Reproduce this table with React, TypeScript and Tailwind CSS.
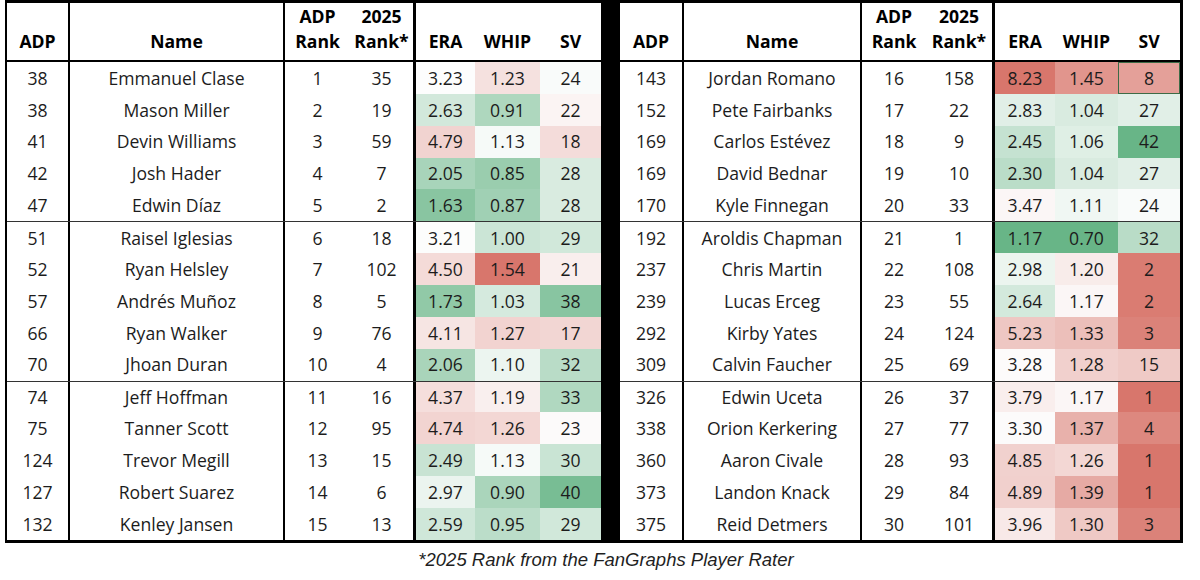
type Row = [number, string, number, number, number, number, number];

const leftRows: Row[] = [
  [38, "Emmanuel Clase", 1, 35, 3.23, 1.23, 24],
  [38, "Mason Miller", 2, 19, 2.63, 0.91, 22],
  [41, "Devin Williams", 3, 59, 4.79, 1.13, 18],
  [42, "Josh Hader", 4, 7, 2.05, 0.85, 28],
  [47, "Edwin Díaz", 5, 2, 1.63, 0.87, 28],
  [51, "Raisel Iglesias", 6, 18, 3.21, 1.0, 29],
  [52, "Ryan Helsley", 7, 102, 4.5, 1.54, 21],
  [57, "Andrés Muñoz", 8, 5, 1.73, 1.03, 38],
  [66, "Ryan Walker", 9, 76, 4.11, 1.27, 17],
  [70, "Jhoan Duran", 10, 4, 2.06, 1.1, 32],
  [74, "Jeff Hoffman", 11, 16, 4.37, 1.19, 33],
  [75, "Tanner Scott", 12, 95, 4.74, 1.26, 23],
  [124, "Trevor Megill", 13, 15, 2.49, 1.13, 30],
  [127, "Robert Suarez", 14, 6, 2.97, 0.9, 40],
  [132, "Kenley Jansen", 15, 13, 2.59, 0.95, 29],
];

const rightRows: Row[] = [
  [143, "Jordan Romano", 16, 158, 8.23, 1.45, 8],
  [152, "Pete Fairbanks", 17, 22, 2.83, 1.04, 27],
  [169, "Carlos Estévez", 18, 9, 2.45, 1.06, 42],
  [169, "David Bednar", 19, 10, 2.3, 1.04, 27],
  [170, "Kyle Finnegan", 20, 33, 3.47, 1.11, 24],
  [192, "Aroldis Chapman", 21, 1, 1.17, 0.7, 32],
  [237, "Chris Martin", 22, 108, 2.98, 1.2, 2],
  [239, "Lucas Erceg", 23, 55, 2.64, 1.17, 2],
  [292, "Kirby Yates", 24, 124, 5.23, 1.33, 3],
  [309, "Calvin Faucher", 25, 69, 3.28, 1.28, 15],
  [326, "Edwin Uceta", 26, 37, 3.79, 1.17, 1],
  [338, "Orion Kerkering", 27, 77, 3.3, 1.37, 4],
  [360, "Aaron Civale", 28, 93, 4.85, 1.26, 1],
  [373, "Landon Knack", 29, 84, 4.89, 1.39, 1],
  [375, "Reid Detmers", 30, 101, 3.96, 1.3, 3],
];

const all = [...leftRows, ...rightRows];

// min / median / max per stat column, over both halves (3-colour scale)
const stats = (idx: number) => {
  const vals = all.map((r) => r[idx] as number).sort((a, b) => a - b);
  const n = vals.length;
  const median = n % 2 ? vals[(n - 1) / 2] : (vals[n / 2 - 1] + vals[n / 2]) / 2;
  return { min: vals[0], max: vals[n - 1], median };
};

const colStats = { 4: stats(4), 5: stats(5), 6: stats(6) } as Record<number, { min: number; max: number; median: number }>;

const WHITE = [253, 253, 253];
const GREEN = [104, 181, 135];
const RED = [216, 118, 108];

const mix = (to: number[], t: number) => {
  const c = WHITE.map((w, i) => Math.round(w + (to[i] - w) * Math.max(0, Math.min(1, t))));
  return `rgb(${c[0]}, ${c[1]}, ${c[2]})`;
};

const heat = (v: number, idx: number) => {
  const { min, max, median } = colStats[idx];
  const lowerBetter = idx !== 6;
  if (lowerBetter) {
    if (v <= median) return mix(GREEN, (median - v) / (median - min));
    return mix(RED, (v - median) / (max - median));
  }
  if (v >= median) return mix(GREEN, (v - median) / (max - median));
  return mix(RED, (median - v) / (median - min));
};

type Cols = { w: string; b: string }[];

const leftCols: Cols = [
  { w: "w-[63px]", b: "border-r-2" },
  { w: "w-[215px]", b: "border-r-2" },
  { w: "w-[65px]", b: "" },
  { w: "w-[66px]", b: "border-r-[3px]" },
  { w: "w-[59px]", b: "" },
  { w: "w-[65px]", b: "" },
  { w: "w-[61px]", b: "" },
];

const rightCols: Cols = [
  { w: "w-[64px]", b: "border-r-2" },
  { w: "w-[178px]", b: "border-r-2" },
  { w: "w-[64px]", b: "" },
  { w: "w-[69px]", b: "border-r-[3px]" },
  { w: "w-[60px]", b: "" },
  { w: "w-[63px]", b: "" },
  { w: "w-[62px]", b: "" },
];

const headers: string[][] = [["ADP"], ["Name"], ["ADP", "Rank"], ["2025", "Rank*"], ["ERA"], ["WHIP"], ["SV"]];

const fmt = (v: number, idx: number) => (idx === 4 || idx === 5 ? v.toFixed(2) : String(v));

const Half = ({ rows, cols, side }: { rows: Row[]; cols: Cols; side: "left" | "right" }) => (
  <div className={side === "left" ? "flex flex-col border-l-2 border-black" : "flex flex-col border-r-[3px] border-black"}>
    <div className="flex h-[59px] border-b-2 border-black">
      {headers.map((h, i) => (
        <div
          key={i}
          className={`${cols[i].w} ${cols[i].b} border-black flex flex-col items-center justify-end pb-[6px] text-[17.6px] font-bold leading-[25px] text-black`}
        >
          {h.map((line) => (
            <span key={line}>{line}</span>
          ))}
        </div>
      ))}
    </div>
    {rows.map((r, ri) => (
      <div
        key={ri}
        className={`flex h-[31.87px] ${ri === 5 || ri === 10 ? "border-t border-[#333]" : ""}`}
      >
        {r.map((v, i) => {
          const isHeat = i >= 4;
          const selected = side === "right" && ri === 0 && i === 6;
          return (
            <div
              key={i}
              className={`${cols[i].w} ${cols[i].b} border-black flex items-center justify-center text-[17.6px] text-[#1c1c1c] ${
                selected ? "shadow-[inset_0_0_0_1px_#3d6a46]" : ""
              }`}
              style={isHeat ? { backgroundColor: heat(v as number, i) } : undefined}
            >
              {typeof v === "number" ? fmt(v, i) : v}
            </div>
          );
        })}
      </div>
    ))}
  </div>
);

export default function App() {
  return (
    <div className="w-[1200px] h-[580px] bg-white font-['Open_Sans',sans-serif]">
      <div className="ml-[5px] w-[1178px] flex border-t-[3px] border-b-[3px] border-black">
        <Half rows={leftRows} cols={leftCols} side="left" />
        <div className="w-[19px] bg-black" />
        <Half rows={rightRows} cols={rightCols} side="right" />
      </div>
      <p className="ml-[5px] w-[1178px] pl-[24px] mt-[3px] text-center italic text-[18.5px] text-[#1f1f1f] font-['Liberation_Sans',Arial,sans-serif]">
        *2025 Rank from the FanGraphs Player Rater
      </p>
    </div>
  );
}
